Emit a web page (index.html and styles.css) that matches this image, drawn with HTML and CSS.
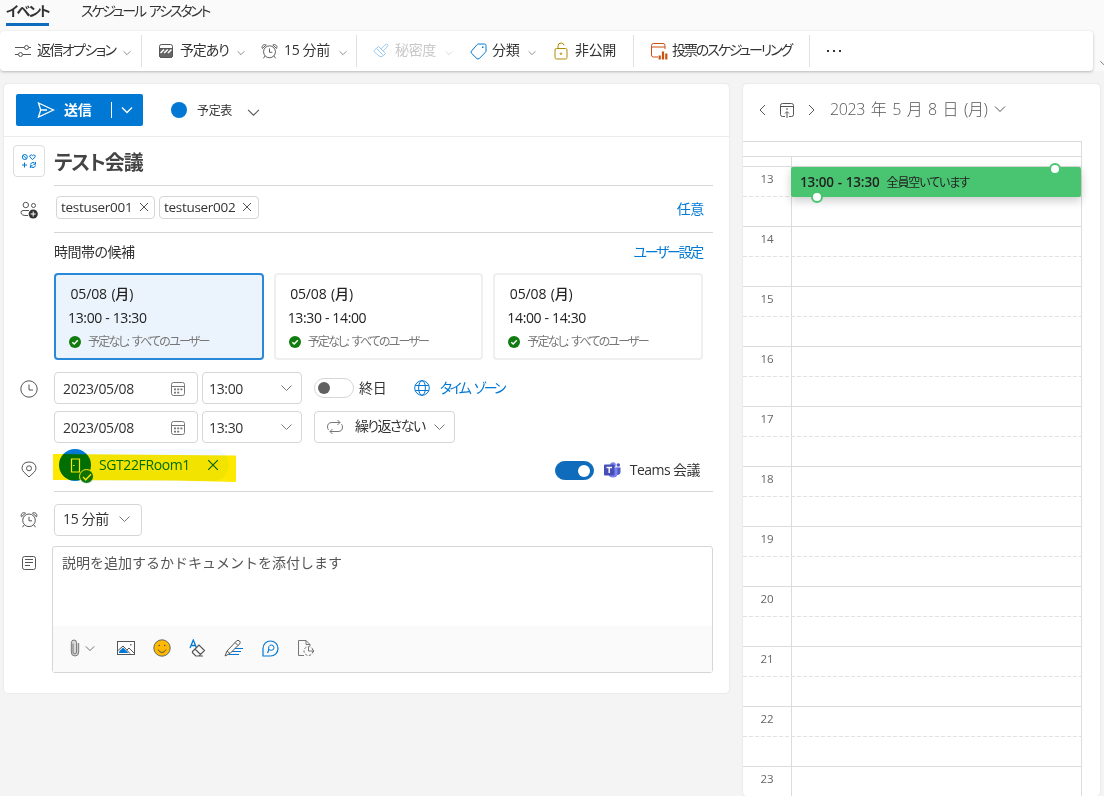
FILE: index.html
```html
<!DOCTYPE html>
<html lang="ja">
<head>
  <meta charset="UTF-8" />
  <meta name="viewport" content="width=device-width, initial-scale=1.0"/>
  <title>テスト会議</title>
  <link rel="stylesheet" href="styles.css">
</head>
<body>
  <!-- Shared icons -->
  <svg class="sprite" width="0" height="0">
    <symbol id="chevron" viewBox="0 0 12 8"><path d="M1 1.5l5 5 5-5"/></symbol>
    <symbol id="alarm" viewBox="0 0 18 18"><circle cx="9" cy="9.3" r="6.3"/><path d="M9 5.8v4h3M4.3 13.8l-1.8 2.4M13.7 13.8l1.8 2.4M1.4 5.8C.2 3 3 .6 5.5 2.200zM16.600 5.8C17.800 3 15 .6 12.500 2.200z"/></symbol>
    <symbol id="close" viewBox="0 0 10 10"><path d="M1 1l8 8M9 1L1 9"/></symbol>
    <symbol id="calendar" viewBox="0 0 16 16"><rect x="1.500" y="1.500" width="13" height="13" rx="2"/><path d="M1.500 5.500h13"/><path class="dots" d="M4 7.500h2v1.800H4zM7.200 7.500h2v1.800h-2zM10.400 7.500h2v1.800h-2zM4 10.800h2v1.800H4zM7.200 10.800h2v1.800h-2z"/></symbol>
    <symbol id="check" viewBox="0 0 12 12"><circle cx="6" cy="6" r="6" fill="#107c10" stroke="none"/><path d="M3.300 6.200l1.900 1.900 3.600-3.800" stroke="#fff" stroke-width="1.400"/></symbol>
  </svg>

  <div class="header">
    <div class="tabs">
      <div class="tab active">イベント</div>
      <div class="tab tab-assistant">スケジュール アシスタント</div>
    </div>
    <div class="toolbar">
      <div class="tool tool-response">
        <svg width="18" height="16" viewBox="0 0 18 16"><path d="M1 4.500h9M15 4.500h2M1 11.500h3M9 11.500h8"/><circle cx="12.500" cy="4.500" r="2"/><circle cx="6.500" cy="11.500" r="2"/></svg>
        <span>返信オプション</span>
        <svg class="chev" width="8" height="6"><use href="#chevron"/></svg>
      </div>
      <div class="tool tool-busy">
        <svg width="16" height="16" viewBox="0 0 16 16"><rect x="1.500" y="1.500" width="13" height="13" rx="2"/><path d="M1.500 5.500h13v7q0 2-2 2h-9q-2 0-2-2z" fill="#666"/><path d="M2.500 10l3.500-3.500M6.200 10l3.500-3.500M10 10l3.500-3.500" stroke="#fff" stroke-width="1.500"/></svg>
        <span>予定あり</span>
        <svg class="chev" width="8" height="6"><use href="#chevron"/></svg>
      </div>
      <div class="tool tool-remind">
        <svg width="17" height="17"><use href="#alarm"/></svg>
        <span>15 分前</span>
        <svg class="chev" width="8" height="6"><use href="#chevron"/></svg>
      </div>
      <div class="tool tool-sensitivity disabled">
        <svg width="16" height="16" viewBox="0 0 16 16"><path d="M5.500 3.500l7 7-2.500 2.500q-2 1.500-4 0L1.500 9q-1-1.500.5-2.500zM3.500 5.500l7 7M8 5.800L12 2q1.500-1.500 2.500-.5t-.5 2.500L10.300 8"/></svg>
        <span>秘密度</span>
        <svg class="chev" width="8" height="6"><use href="#chevron"/></svg>
      </div>
      <div class="tool tool-category">
        <svg class="blue" width="17" height="17" viewBox="0 0 17 17"><path d="M8.500 1H14.500Q16 1 16 2.500V8q0 .8-.6 1.400L9.200 15.500q-1.200 1-2.300 0L1.500 10.300q-1-1.200 0-2.200L7 1.700Q7.600 1 8.500 1z"/><rect x="12" y="3.500" width="1.500" height="1.500" fill="#0078d4" stroke="none"/></svg>
        <span>分類</span>
        <svg class="chev" width="8" height="6"><use href="#chevron"/></svg>
      </div>
      <div class="tool tool-private">
        <svg class="gold" width="14" height="18" viewBox="0 0 14 18"><rect x="1" y="6.500" width="12" height="10.500" rx="1.500"/><path d="M4 6.500V4q0-3 3-3 2.500 0 3 2.300"/><circle cx="7" cy="11.700" r=".8"/></svg>
        <span>非公開</span>
      </div>
      <div class="tool tool-poll">
        <svg class="orange" width="18" height="18" viewBox="0 0 18 18"><path d="M8 15H3.500Q1.500 15 1.500 13V3.500Q1.500 1.500 3.500 1.500h9.500q2 0 2 2V7M1.500 5h13.500"/><path d="M9.700 17.500v-4M13 17.500v-8M16.300 17.500v-6" stroke-width="2.200"/></svg>
        <span>投票のスケジューリング</span>
      </div>
      <div class="tool tool-more">
        <svg width="14" height="4" viewBox="0 0 14 4"><path d="M0 1h2v2H0zM6 1h2v2H6zM12 1h2v2h-2z" fill="#333" stroke="none"/></svg>
      </div>
    </div>
    <svg class="collapse" width="10" height="6"><use href="#chevron"/></svg>
  </div>

  <div class="main">
    <!-- Event form -->
    <div class="form">
      <div class="send-bar">
        <div class="send">
          <svg width="18" height="16" viewBox="0 0 18 16"><path d="M1.500 1L16.500 8l-15 7 2.200-7zM3.700 8H10"/></svg>
          <span>送信</span>
          <div class="send-more"><svg width="12" height="8"><use href="#chevron"/></svg></div>
        </div>
        <div class="cal-dot"></div>
        <span class="cal-name">予定表</span>
        <svg class="cal-chev" width="13" height="9"><use href="#chevron"/></svg>
      </div>

      <div class="row">
        <div class="charm">
          <svg class="blue" width="16" height="16" viewBox="0 0 16 16"><circle cx="3.800" cy="4" r="2.500"/><path d="M2 2.300l3.600 3.500M11.500 6.500L9 4.200q-.8-1.300.5-2.200 1.200-.4 2 .6.800-1 2-.6 1.300.9.500 2.200zM3.500 9.500v5M1 12h5M9.500 11.500q.5-2 2.500-2 1.500 0 2.300 1.300M14.500 9v2.300h-2.200M14.500 12.500q-.6 2-2.500 2-1.500 0-2.400-1.200M9.400 15v-2.300h2.200"/></svg>
        </div>
        <div class="title line">テスト会議</div>
      </div>

      <div class="row">
        <div class="row-icon people">
          <svg width="18" height="18" viewBox="0 0 18 18"><circle cx="5.800" cy="4" r="2.700"/><circle cx="13.500" cy="4.500" r="2"/><path d="M8 14.500Q1 15 1 11.500 1 9.500 3 9.500h6"/><circle cx="13.200" cy="13" r="4.600" fill="#333" stroke="none"/><path d="M13.200 10.500v5M10.700 13h5" stroke="#fff"/></svg>
        </div>
        <div class="people-field line">
          <div class="pill">testuser001 <svg width="10" height="10"><use href="#close"/></svg></div>
          <div class="pill">testuser002 <svg width="10" height="10"><use href="#close"/></svg></div>
          <a class="optional">任意</a>
        </div>
      </div>

      <div class="suggest-head">
        <span>時間帯の候補</span>
        <a>ユーザー設定</a>
      </div>
      <div class="suggestions">
        <div class="slot selected">
          <div class="slot-day">05/08 (月)</div>
          <div>13:00 - 13:30</div>
          <div class="slot-free"><svg width="12" height="12"><use href="#check"/></svg><span>予定なし: すべてのユーザー</span></div>
        </div>
        <div class="slot">
          <div class="slot-day">05/08 (月)</div>
          <div>13:30 - 14:00</div>
          <div class="slot-free"><svg width="12" height="12"><use href="#check"/></svg><span>予定なし: すべてのユーザー</span></div>
        </div>
        <div class="slot">
          <div class="slot-day">05/08 (月)</div>
          <div>14:00 - 14:30</div>
          <div class="slot-free"><svg width="12" height="12"><use href="#check"/></svg><span>予定なし: すべてのユーザー</span></div>
        </div>
      </div>

      <div class="row times">
        <div class="row-icon">
          <svg width="18" height="18" viewBox="0 0 18 18"><circle cx="9" cy="9" r="8.200"/><path d="M9 4.500V10h4"/></svg>
        </div>
        <div class="time-lines">
          <div class="time-line">
            <div class="box date">2023/05/08 <svg width="16" height="16"><use href="#calendar"/></svg></div>
            <div class="box time">13:00 <svg width="13" height="8"><use href="#chevron"/></svg></div>
            <div class="toggle"></div>
            <span class="allday">終日</span>
            <svg class="blue globe" width="16" height="16" viewBox="0 0 16 16"><circle cx="8" cy="8" r="7.300"/><ellipse cx="8" cy="8" rx="3.400" ry="7.300"/><path d="M1.300 5.500h13.400M1.300 10.500h13.400"/></svg>
            <a class="zone">タイム ゾーン</a>
          </div>
          <div class="time-line">
            <div class="box date">2023/05/08 <svg width="16" height="16"><use href="#calendar"/></svg></div>
            <div class="box time">13:30 <svg width="13" height="8"><use href="#chevron"/></svg></div>
            <div class="box repeat">
              <svg width="18" height="16" viewBox="0 0 18 16"><path d="M11.500 1l2.500 2.500L11.500 6M14 3.500H6Q1.500 3.500 1.500 8q0 1.500 1 2.800M6.500 15L4 12.500 6.500 10M4 12.500h8q4.500 0 4.500-4.500 0-1.500-1-2.800"/></svg>
              <span>繰り返さない</span>
              <svg width="13" height="8"><use href="#chevron"/></svg>
            </div>
          </div>
        </div>
      </div>

      <div class="row location">
        <div class="row-icon pin">
          <svg width="16" height="17" viewBox="0 0 16 17"><path d="M8 16L3 11.300Q1 9.300 1 7.300 1.300 1 8 1t7 6.300q0 2-2 4z"/><circle cx="8" cy="7.300" r="2.500"/></svg>
        </div>
        <div class="location-field line">
          <div class="room">
            <div class="room-avatar">
              <svg width="11" height="15" viewBox="0 0 11 15"><path d="M1.500 1h8v13h-8zM3 7.500h1.500" stroke="#fff" stroke-width="1.200"/></svg>
              <div class="room-ok"><svg width="10" height="8" viewBox="0 0 10 8"><path d="M1 4l2.700 2.800L9 1.200" stroke="#fff" stroke-width="1.300"/></svg></div>
            </div>
            <span>SGT22FRoom1</span>
            <svg width="12" height="12"><use href="#close"/></svg>
          </div>
          <svg class="marker" width="183" height="28" viewBox="0 0 183 28"><path d="M0 0l183 1.500V28L120 26.500 0 26z" fill="#ffe900" stroke="none"/></svg>
          <div class="toggle on"></div>
          <svg class="teams" width="17" height="16" viewBox="0 0 17 16"><circle cx="9" cy="3" r="2.800" fill="#7b83eb" stroke="none"/><circle cx="14.300" cy="3" r="1.800" fill="#5059c9" stroke="none"/><path d="M12 5.500h4.500V10q0 2.500-2.500 3h-2z" fill="#5059c9" stroke="none"/><path d="M4 5.500h9.500V11q0 4.500-4.500 4.500T4 11z" fill="#7b83eb" stroke="none"/><rect y="2.500" width="10.500" height="11" rx="1" fill="#464eb8" stroke="none"/><path d="M2.500 5.500h5.500M5.200 5.500v5.500" stroke="#fff" stroke-width="1.400"/></svg>
          <span class="teams-label">Teams 会議</span>
        </div>
      </div>

      <div class="row reminder">
        <div class="row-icon"><svg width="18" height="18"><use href="#alarm"/></svg></div>
        <div class="box remind-box">15 分前 <svg width="13" height="8"><use href="#chevron"/></svg></div>
      </div>

      <div class="row">
        <div class="row-icon notes">
          <svg width="16" height="16" viewBox="0 0 16 16"><rect x="1.500" y="1.500" width="13" height="13" rx="2"/><path d="M4 4.500h8M4 7.500h8M4 10.500h5"/></svg>
        </div>
        <div class="editor">
          <div class="editor-text">説明を追加するかドキュメントを添付します</div>
          <div class="editor-tools">
            <svg width="10" height="18" viewBox="0 0 10 18"><path d="M3 4.500v8.500q0 1.800 1.800 1.800T6.600 13V3.800Q6.600 1 4 1T1.300 3.800V13Q1.300 17 5 17t3.700-4V4" stroke="#777" fill="#d8d8d8"/></svg>
            <svg class="clip-chev" width="10" height="7"><use href="#chevron"/></svg>
            <svg width="18" height="14" viewBox="0 0 18 14"><rect x=".5" y=".5" width="17" height="13" fill="#fff"/><path d="M2 12V10.500l4-4 5.500 5.500z" fill="#0078d4" stroke="none"/><path d="M1 9.500L6 5l7 7.500M9.800 9.200l2.200-2.200L17 12" stroke="#555"/><rect x="13" y="3" width="1.500" height="1.500" fill="#777" stroke="none"/></svg>
            <svg width="18" height="18" viewBox="0 0 18 18"><circle cx="9" cy="9" r="8.200" fill="#ffb900" stroke="#666"/><path d="M5 10.500q1.500 3 4 3t4-3" stroke="#555"/><circle cx="6.300" cy="6.500" r=".8" fill="#555" stroke="none"/><circle cx="11.700" cy="6.500" r=".8" fill="#555" stroke="none"/></svg>
            <svg width="17" height="18" viewBox="0 0 17 18"><path d="M1 9L4.300 1 7.500 9M2.200 6.500h4.300" stroke="#0078d4" stroke-width="1.300"/><path d="M3.500 12.500L10 6l5.500 5.500-5.500 5.500H6.800L3.500 13.800zM6 10l5.500 5.500M7 17h7" stroke-width="1.200"/></svg>
            <svg width="20" height="18" viewBox="0 0 20 18"><path d="M10 9.500h9M7 12.500h10M5 15.500h10" stroke="#0078d4"/><path d="M1 17l2-5L12.500 2q1.500-1.500 3 0t0 3L6 14.500zM3 12l3 2.500M11 3.500L14 6.500" fill="#fafafa"/></svg>
            <svg class="blue" width="17" height="17" viewBox="0 0 17 17"><path d="M1 16V8.500A7.500 7.500 0 1 1 8.500 16zM5.500 13l1.500-3.500" stroke-width="1.200"/><path d="M6.800 10.500Q5.800 5 9.500 5 12 5.200 12 7.700T9.300 10.300q-1.500 0-2-1"/></svg>
            <svg width="18" height="18" viewBox="0 0 18 18"><path d="M7 16.500H1.500v-15H9L13 5.500V7M9 1.500v4h4" stroke="#777"/><circle cx="11.500" cy="12" r="4.500" stroke="#777" stroke-dasharray="2.500 1.500"/><path d="M11.500 8v4h5.500M15 10l2 2-2 2" stroke="#777"/></svg>
          </div>
        </div>
      </div>
    </div>

    <!-- Day view -->
    <div class="day">
      <div class="day-head">
        <svg width="7" height="12" viewBox="0 0 7 12"><path d="M6 1L1 6l5 5"/></svg>
        <svg class="today" width="16" height="16" viewBox="0 0 16 16"><path d="M6 14.500H3.500q-2 0-2-2v-9q0-2 2-2h9q2 0 2 2v9q0 2-2 2h-2.500M1.500 4.500h13M8 16v-6M6 11.500l2-2 2 2M8 6v2"/></svg>
        <svg width="7" height="12" viewBox="0 0 7 12"><path d="M1 1l5 5-5 5"/></svg>
        <span>2023 年 5 月 8 日 (月)</span>
        <svg class="day-chev" width="12" height="8"><use href="#chevron"/></svg>
      </div>
      <div class="schedule">
        <div class="allday-row"></div>
        <div class="hour spacer"><div class="label"></div><div class="cell"></div></div>
        <div class="hour"><div class="label">13</div><div class="cell">
          <div class="event"><b>13:00 - 13:30</b><span>全員空いています</span></div>
        </div></div>
        <div class="hour"><div class="label">14</div><div class="cell"></div></div>
        <div class="hour"><div class="label">15</div><div class="cell"></div></div>
        <div class="hour"><div class="label">16</div><div class="cell"></div></div>
        <div class="hour"><div class="label">17</div><div class="cell"></div></div>
        <div class="hour"><div class="label">18</div><div class="cell"></div></div>
        <div class="hour"><div class="label">19</div><div class="cell"></div></div>
        <div class="hour"><div class="label">20</div><div class="cell"></div></div>
        <div class="hour"><div class="label">21</div><div class="cell"></div></div>
        <div class="hour"><div class="label">22</div><div class="cell"></div></div>
        <div class="hour"><div class="label">23</div><div class="cell"></div></div>
      </div>
    </div>
  </div>
</body>
</html>
```
FILE: styles.css
```css
*,
*::before,
*::after {
  box-sizing: border-box;
}

body {
  margin: 0;
  height: 796px;
  overflow: hidden;
  background-color: #f4f4f4;
  color: #333;
  font-family: "Open Sans", "Noto Sans CJK JP", sans-serif;
  font-size: 14px;
  line-height: 20px;
  letter-spacing: -0.35px;
  font-feature-settings: "palt";
  white-space: nowrap;
}

svg {
  fill: none;
  stroke: #555;
  stroke-width: 1;
  flex-shrink: 0;
}
.sprite {
  position: absolute;
}
.dots {
  fill: #777;
  stroke: none;
}
.blue {
  stroke: #0078d4;
}
.gold {
  stroke: #b38b00;
}
.orange {
  stroke: #ca5010;
}
a {
  color: #0078d4;
}

/* Header */
.header {
  position: relative;
  height: 71px;
  background-color: #fafafa;
}
.tabs {
  display: flex;
  gap: 32px;
  height: 31px;
  padding-left: 6px;
}
.tab {
  height: 26px;
  line-height: 21px;
  letter-spacing: -2.2px;
  word-spacing: 2.5px;
}
.tab.active {
  width: 43px;
  font-weight: bold;
  letter-spacing: -2px;
  border-bottom: 3px solid #0f6cbd;
}
.toolbar {
  display: flex;
  align-items: center;
  width: 1093px;
  height: 40px;
  padding-left: 14px;
  background-color: #fff;
  border-radius: 4px;
  box-shadow: 0 1px 3px rgba(0, 0, 0, 0.25);
}
.tool {
  display: flex;
  align-items: center;
  height: 32px;
}
.tool span {
  margin-left: 6px;
  padding-bottom: 2px;
}
.chev {
  margin: 3px 0 0 auto;
}
.tool-response {
  width: 128px;
  padding-right: 10px;
  border-right: 1px solid #e0e0e0;
}
.tool-response span {
  margin-left: 5px;
  letter-spacing: -1.6px;
}
.tool-busy {
  width: 103px;
  margin-left: 16px;
}
.tool-busy span {
  letter-spacing: -1.2px;
}
.tool-busy svg.chev {
  margin-right: 16px;
}
.tool-remind {
  width: 96px;
  padding-right: 9px;
  border-right: 1px solid #e0e0e0;
}
.tool-sensitivity {
  width: 80px;
  margin-left: 16px;
}
.disabled {
  color: #c8c8c8;
}
.disabled svg {
  stroke: #9fcdf2;
}
.disabled svg.chev {
  stroke: #c8c8c8;
}
.tool-category {
  width: 66px;
  margin-left: 17px;
}
.tool-category span {
  margin-left: 5px;
}
.tool-private {
  width: 80px;
  margin-left: 18px;
  border-right: 1px solid #e0e0e0;
}
.tool-private span {
  margin-left: 7px;
}
.tool-poll {
  width: 160px;
  margin-left: 16px;
  border-right: 1px solid #e0e0e0;
}
.tool-poll span {
  margin-left: 4px;
  letter-spacing: -2.1px;
}
.tool-more {
  margin-left: 17px;
}
.collapse {
  position: absolute;
  right: -5px;
  top: 60px;
}

.main {
  display: flex;
  gap: 14px;
  align-items: flex-start;
  padding: 13px 4px 0;
}

/* Event form */
.form {
  width: 725px;
  height: 609px;
  background-color: #fff;
  border-radius: 4px;
  box-shadow: 0 0 2px rgba(0, 0, 0, 0.12);
}
.send-bar {
  display: flex;
  align-items: center;
  height: 53px;
  padding-left: 12px;
  border-bottom: 1px solid #edebe9;
}
.send {
  display: flex;
  align-items: center;
  width: 127px;
  height: 32px;
  padding-left: 21px;
  background-color: #0078d4;
  border-radius: 2px;
  color: #fff;
  font-weight: bold;
}
.send svg {
  stroke: #fff;
  stroke-width: 1.3;
}
.send span {
  margin-left: 9px;
}
.send-more {
  display: flex;
  margin-left: auto;
  padding: 4px 10px 4px 9px;
  border-left: 1px solid #fff;
}
.cal-dot {
  width: 16px;
  height: 16px;
  margin-left: 28px;
  border-radius: 50%;
  background-color: #0078d4;
}
.cal-name {
  width: 36px;
  margin: 1px 14px 0 10px;
  font-size: 12px;
}
.cal-chev {
  margin-top: 4px;
}

.row {
  display: flex;
}
.row-icon {
  display: flex;
  justify-content: center;
  width: 50px;
  flex-shrink: 0;
}
.line {
  width: 659px;
  border-bottom: 1px solid #d6d6d6;
}
.charm {
  display: flex;
  align-items: center;
  justify-content: center;
  width: 32px;
  height: 32px;
  margin: 8px 9px 0;
  border: 1px solid #ddd;
  border-radius: 4px;
}
.title {
  height: 49px;
  line-height: 51px;
  font-size: 20px;
  font-weight: bold;
  letter-spacing: -1.1px;
  color: #444;
}
.people {
  padding-top: 15px;
}
.people-field {
  display: flex;
  align-items: flex-start;
  gap: 4px;
  height: 47px;
  padding: 10px 9px 0 2px;
}
.pill {
  display: flex;
  align-items: center;
  justify-content: space-between;
  width: 99px;
  height: 23px;
  padding: 0 5px 1px 4px;
  border: 1px solid #d6d6d6;
  border-radius: 4px;
  font-size: 13.5px;
  letter-spacing: -0.3px;
}
.pill + .pill {
  width: 100px;
  padding-right: 6px;
}
.optional {
  margin: 3px 0 0 auto;
}
.suggest-head {
  display: flex;
  justify-content: space-between;
  height: 40px;
  padding: 9px 27px 0 50px;
}
.suggest-head span {
  letter-spacing: -0.5px;
}
.suggest-head a {
  letter-spacing: -2.3px;
}
.suggestions {
  display: grid;
  grid-template-columns: repeat(3, 1fr);
  gap: 10px;
  padding: 0 26px 0 50px;
}
.slot {
  height: 87px;
  padding: 7px 12px 0;
  border: 2px solid #efefef;
  border-radius: 4px;
  line-height: 24px;
  color: #222;
  font-weight: 500;
}
.slot.selected {
  border-color: #2b88d8;
  background-color: #ebf3fc;
}
.slot-day {
  padding-left: 2.5px;
  word-spacing: 1px;
  letter-spacing: -0.15px;
}
.slot-free {
  display: flex;
  align-items: center;
  gap: 7px;
  height: 24px;
  padding-left: 1px;
  color: #777;
  font-size: 12px;
  font-weight: normal;
  letter-spacing: -1.8px;
  word-spacing: 2.5px;
}

.times {
  padding-top: 12px;
}
.times .row-icon {
  padding-top: 8px;
}
.time-lines {
  display: grid;
  gap: 7px;
}
.time-line {
  display: flex;
  align-items: center;
}
.box {
  display: flex;
  align-items: center;
  justify-content: space-between;
  height: 32px;
  border: 1px solid #d6d6d6;
  border-radius: 4px;
}
.box svg {
  stroke: #777;
}
.date,
.time {
  line-height: 22px;
  padding-top: 2px;
}
.date {
  width: 144px;
  padding-left: 8px;
  padding-right: 11px;
}
.time {
  width: 100px;
  margin-left: 4px;
  padding-left: 6px;
  padding-right: 8px;
}
.time svg {
  margin-bottom: 2px;
}
.toggle {
  width: 40px;
  height: 20px;
  margin-left: 12px;
  padding: 3px;
  border: 1px solid #d6d6d6;
  border-radius: 10px;
}
.toggle::before {
  content: "";
  display: block;
  width: 12px;
  height: 12px;
  border-radius: 50%;
  background-color: #616161;
}
.allday {
  width: 27px;
  margin-left: 5px;
}
.globe {
  margin-left: 28px;
}
.zone {
  margin-left: 10px;
  letter-spacing: -2.8px;
  word-spacing: 4px;
}
.repeat {
  width: 141px;
  margin-left: 12px;
  padding: 0 8px 0 11px;
}
.repeat span {
  margin: 0 auto 2px 11px;
  letter-spacing: -1.6px;
}

.location-field {
  position: relative;
  display: flex;
  height: 49px;
  padding: 6px 13px 0 5px;
}
.pin {
  padding-top: 18px;
}
.room {
  display: flex;
  align-items: center;
  width: 170px;
  height: 32px;
  border-radius: 16px;
  background-color: #f3f9fd;
  color: #0078d4;
  letter-spacing: -0.4px;
}
.room > svg {
  margin: 0 10px 0 auto;
  stroke: #0f6cbd;
}
.room-avatar {
  position: relative;
  display: flex;
  align-items: center;
  justify-content: center;
  width: 32px;
  height: 32px;
  margin-right: 8px;
  border-radius: 50%;
  background-color: #0078d4;
}
.room-ok {
  position: absolute;
  right: -3px;
  bottom: -3px;
  display: flex;
  align-items: center;
  justify-content: center;
  width: 15px;
  height: 15px;
  border-radius: 50%;
  border: 1px solid #fff;
  background-color: #107c10;
}
.marker {
  position: absolute;
  left: -1px;
  top: 11px;
  mix-blend-mode: multiply;
}
.toggle.on {
  width: 39px;
  height: 19px;
  margin: 12px 0 0 auto;
  background-color: #0f6cbd;
  border-color: #0f6cbd;
}
.toggle.on::before {
  margin: 0 0 0 19px;
  background-color: #fff;
}
.teams {
  margin: 13px 9px 0 10px;
}
.teams-label {
  padding-top: 11px;
  letter-spacing: -0.55px;
}

.reminder {
  padding: 12px 0 10px;
}
.reminder .row-icon {
  padding-top: 7px;
}
.remind-box {
  width: 88px;
  padding: 0 10px 2px 8px;
}
.notes {
  width: 48px;
  padding: 9px 0 0 2px;
}
.editor {
  width: 661px;
  height: 127px;
  border: 1px solid #d6d6d6;
  border-radius: 3px;
}
.editor-text {
  height: 79px;
  padding: 6px 9px;
  font-feature-settings: normal;
  letter-spacing: 0;
  color: #555;
}
.editor-tools {
  display: flex;
  align-items: center;
  gap: 18px;
  height: 46px;
  padding: 0 0 2px 17px;
  background-color: #fafafa;
}
.clip-chev {
  margin: 0 4px 0 -13px;
}

/* Day view */
.day {
  width: 357px;
  height: 712px;
  background-color: #fff;
  border-radius: 4px;
  box-shadow: 0 0 2px rgba(0, 0, 0, 0.12);
}
.day-head {
  display: flex;
  align-items: center;
  height: 57px;
  padding: 0 0 5px 16px;
  color: #555;
  font-size: 16px;
}
.day-head .today {
  margin: 0 13px;
}
.day-head span {
  width: 157px;
  margin: 0 0 2px 15px;
  font-weight: 300;
  word-spacing: 1.900px;
}
.day-chev {
  margin: 0 0 2px 7px;
}
.schedule {
  width: 339px;
  border-top: 1px solid #dcdcdc;
  border-right: 1px solid #dcdcdc;
}
.allday-row {
  height: 15px;
  border-bottom: 1px solid #dcdcdc;
}
.hour {
  display: grid;
  grid-template-columns: 48px 1fr;
  height: 60px;
  border-top: 1px solid #dcdcdc;
  background: repeating-linear-gradient(90deg, #e2e2e2 0 4px, transparent 4px 6px) 0 29px / 100% 1px no-repeat;
}
.hour.spacer {
  height: 9px;
  border-top: none;
  background: none;
}
.label {
  padding-top: 2px;
  text-align: center;
  font-size: 11.5px;
  letter-spacing: 0;
  color: #666;
}
.cell {
  position: relative;
  border-left: 1px solid #dcdcdc;
}
.event {
  display: flex;
  align-items: center;
  gap: 7px;
  width: 290px;
  height: 30px;
  margin-left: -1px;
  padding-left: 9px;
  border-radius: 2px;
  background-color: #49c572;
  box-shadow: 0 4px 10px rgba(0, 0, 0, 0.2);
  color: #222;
}
.event b {
  font-size: 13.5px;
  font-weight: 600;
  letter-spacing: -0.15px;
  word-spacing: 0.5px;
}
.event span {
  padding-top: 1px;
  font-size: 12px;
  letter-spacing: -1.1px;
}
/* drag handles */
.event::before,
.event::after {
  content: "";
  position: absolute;
  width: 12px;
  height: 12px;
  border: 2px solid #49c572;
  border-radius: 50%;
  background-color: #fff;
}
.event::before {
  right: 20px;
  top: -4px;
}
.event::after {
  left: 19px;
  top: 24px;
}
```
